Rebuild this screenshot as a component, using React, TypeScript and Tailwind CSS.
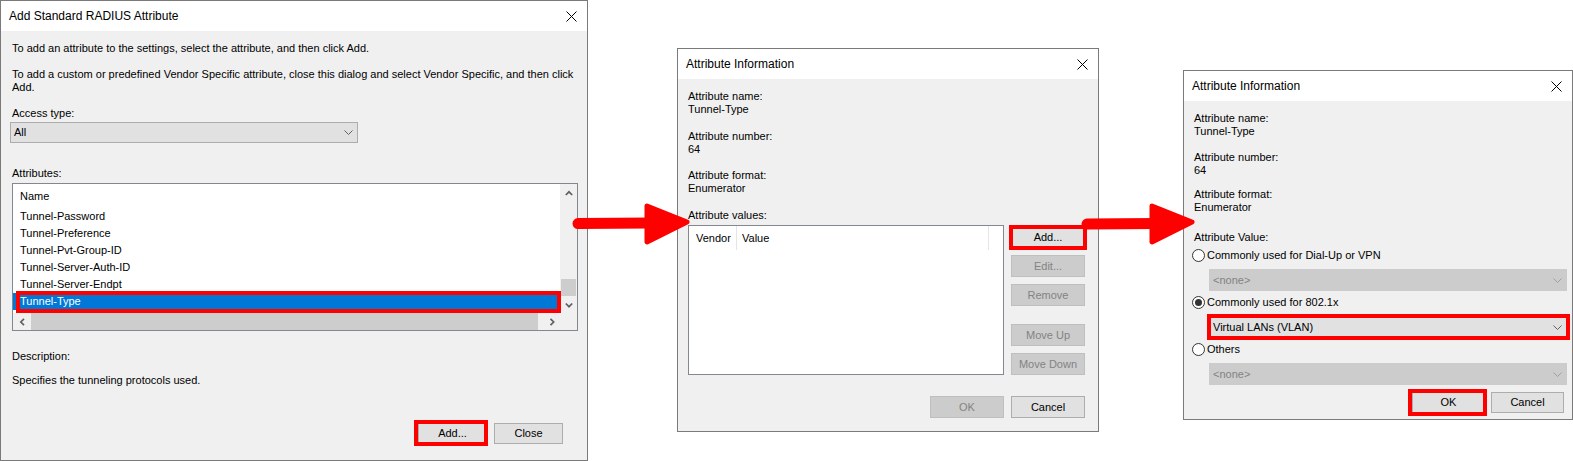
import React from 'react';

const attrs = [
  'Tunnel-Password',
  'Tunnel-Preference',
  'Tunnel-Pvt-Group-ID',
  'Tunnel-Server-Auth-ID',
  'Tunnel-Server-Endpt',
  'Tunnel-Type',
];

function CloseX() {
  return (
    <svg width="11" height="11" viewBox="0 0 11 11" className="block">
      <path d="M0.5 0.5 L10.5 10.5 M10.5 0.5 L0.5 10.5" stroke="#000" strokeWidth="1" fill="none" />
    </svg>
  );
}

function ComboChevron({ color }: { color: string }) {
  return (
    <svg width="9" height="5" viewBox="0 0 9 5" className="block">
      <path d="M0.5 0.5 L4.5 4.5 L8.5 0.5" stroke={color} strokeWidth="1" fill="none" />
    </svg>
  );
}

function ScrollChevron({ dir }: { dir: 'up' | 'down' | 'left' | 'right' }) {
  const d = {
    up: 'M0.8 5 L4 1.8 L7.2 5',
    down: 'M0.8 1.5 L4 4.7 L7.2 1.5',
    left: 'M5 0.8 L1.8 4 L5 7.2',
    right: 'M1.5 0.8 L4.7 4 L1.5 7.2',
  }[dir];
  const vert = dir === 'up' || dir === 'down';
  return (
    <svg width={vert ? 8 : 6} height={vert ? 6 : 8} viewBox={vert ? '0 0 8 6' : '0 0 6 8'} className="block">
      <path d={d} stroke="#606060" strokeWidth="1.7" fill="none" />
    </svg>
  );
}

function Win({ className, title, children }: { className: string; title: string; children: React.ReactNode }) {
  return (
    <div className={`absolute flex flex-col border border-[#7a7a7a] bg-[#f0f0f0] ${className}`}>
      <div className="flex h-[30px] shrink-0 items-center justify-between bg-white pl-[8px] pr-[10px]">
        <span className="text-[12px] leading-[16px]">{title}</span>
        <CloseX />
      </div>
      {children}
    </div>
  );
}

function Btn({ label, disabled, className = '' }: { label: string; disabled?: boolean; className?: string }) {
  return (
    <div
      className={`flex items-center justify-center border ${
        disabled ? 'border-[#bfbfbf] bg-[#cccccc] text-[#838383]' : 'border-[#adadad] bg-[#e1e1e1] text-black'
      } ${className}`}
    >
      {label}
    </div>
  );
}

function Combo({ value, disabled, className = '' }: { value: string; disabled?: boolean; className?: string }) {
  return (
    <div
      className={`flex items-center justify-between border pl-[3px] pr-[4px] ${
        disabled ? 'border-[#cccccc] bg-[#cccccc] text-[#838383]' : 'border-[#adadad] bg-[#e1e1e1] text-black'
      } ${className}`}
    >
      <span>{value}</span>
      <ComboChevron color={disabled ? '#a0a0a0' : '#606060'} />
    </div>
  );
}

function Radio({ checked, label }: { checked?: boolean; label: string }) {
  return (
    <div className="flex h-[13px] items-center">
      <span className="ml-[-2px] flex h-[13px] w-[13px] items-center justify-center rounded-full border border-[#333333] bg-white">
        {checked && <span className="h-[7px] w-[7px] rounded-full bg-[#333333]" />}
      </span>
      <span className="ml-[2px]">{label}</span>
    </div>
  );
}

function Arrow({ className, shaft, head }: { className: string; shaft: string; head: string }) {
  return (
    <svg width="130" height="56" viewBox="0 0 130 56" className={`pointer-events-none absolute ${className}`}>
      <path d={shaft} stroke="#ff0000" strokeWidth="11" strokeLinecap="round" fill="none" />
      <polygon points={head} fill="#ff0000" stroke="#ff0000" strokeWidth="5" strokeLinejoin="round" />
    </svg>
  );
}

function AttributeList() {
  return (
    <div className="relative mt-[3px] grid h-[148px] w-[566px] grid-cols-[1fr_17px] grid-rows-[1fr_17px] border border-[#828790] bg-white">
      <div className="flex flex-col">
        <div className="flex h-[24px] items-center pl-[7px]">Name</div>
        {attrs.map((a) => (
          <div
            key={a}
            className={`flex h-[17px] items-center pl-[7px] ${a === 'Tunnel-Type' ? 'bg-[#0078d7] text-white' : ''}`}
          >
            {a}
          </div>
        ))}
      </div>
      <div className="flex flex-col bg-[#f0f0f0]">
        <div className="flex h-[17px] items-center justify-center">
          <ScrollChevron dir="up" />
        </div>
        <div className="flex flex-1 flex-col justify-end">
          <div className="mx-[1px] h-[17px] bg-[#cdcdcd]" />
        </div>
        <div className="flex h-[17px] items-center justify-center">
          <ScrollChevron dir="down" />
        </div>
      </div>
      <div className="flex bg-[#f0f0f0]">
        <div className="flex w-[17px] items-center justify-center">
          <ScrollChevron dir="left" />
        </div>
        <div className="flex-1">
          <div className="ml-[1px] h-full w-[507px] bg-[#cdcdcd]" />
        </div>
        <div className="flex w-[17px] items-center justify-center">
          <ScrollChevron dir="right" />
        </div>
      </div>
      <div className="bg-[#f0f0f0]" />
      <div className="pointer-events-none absolute left-[3px] top-[107px] h-[22px] w-[545px] border-4 border-[#ff0000]" />
    </div>
  );
}

export default function App() {
  return (
    <div className="relative h-[461px] w-[1573px] overflow-hidden bg-white font-['Liberation_Sans',Arial,sans-serif] text-[11px] leading-[13px] text-black">
      {/* dialog 1 */}
      <Win className="left-0 top-0 h-[461px] w-[588px]" title="Add Standard RADIUS Attribute">
        <div className="flex flex-col pl-[11px] pt-[11px]">
          <p className="whitespace-nowrap">To add an attribute to the settings, select the attribute, and then click Add.</p>
          <p className="mt-[13px] whitespace-nowrap">
            To add a custom or predefined Vendor Specific attribute, close this dialog and select Vendor Specific, and then click
            <br />
            Add.
          </p>
          <p className="mt-[13px]">Access type:</p>
          <Combo value="All" className="ml-[-2px] mt-[2px] h-[21px] w-[348px]" />
          <p className="mt-[24px]">Attributes:</p>
          <AttributeList />
          <p className="mt-[19px]">Description:</p>
          <p className="mt-[11px]">Specifies the tunneling protocols used.</p>
          <div className="mt-[36px] flex justify-end gap-[7px] pr-[24px]">
            <div className="relative">
              <Btn label="Add..." className="h-[21px] w-[69px]" />
              <div className="pointer-events-none absolute left-[-4px] top-[-3px] h-[26px] w-[74px] border-4 border-[#ff0000]" />
            </div>
            <Btn label="Close" className="h-[21px] w-[69px]" />
          </div>
        </div>
      </Win>

      {/* dialog 2 */}
      <Win className="left-[677px] top-[48px] h-[384px] w-[422px]" title="Attribute Information">
        <div className="flex flex-col pl-[10px] pr-[13px] pt-[11px]">
          <p>Attribute name:</p>
          <p>Tunnel-Type</p>
          <p className="mt-[14px]">Attribute number:</p>
          <p>64</p>
          <p className="mt-[13px]">Attribute format:</p>
          <p>Enumerator</p>
          <p className="mt-[14px]">Attribute values:</p>
          <div className="mt-[3px] flex gap-[7px]">
            <div className="h-[150px] w-[316px] border border-[#828790] bg-white">
              <div className="flex h-[24px]">
                <div className="flex w-[48px] items-center border-r border-[#e5e5e5] pl-[7px]">Vendor</div>
                <div className="flex w-[252px] items-center border-r border-[#e5e5e5] pl-[5px]">Value</div>
              </div>
            </div>
            <div className="flex w-[74px] flex-col">
              <div className="relative mt-[1px]">
                <Btn label="Add..." className="h-[22px]" />
                <div className="pointer-events-none absolute left-[-2px] top-[-1px] h-[25px] w-[78px] border-4 border-[#ff0000]" />
              </div>
              <Btn label="Edit..." disabled className="mt-[7px] h-[22px]" />
              <Btn label="Remove" disabled className="mt-[7px] h-[22px]" />
              <Btn label="Move Up" disabled className="mt-[18px] h-[22px]" />
              <Btn label="Move Down" disabled className="mt-[7px] h-[22px]" />
            </div>
          </div>
          <div className="mt-[21px] flex justify-end gap-[7px]">
            <Btn label="OK" disabled className="h-[22px] w-[74px]" />
            <Btn label="Cancel" className="h-[22px] w-[74px]" />
          </div>
        </div>
      </Win>

      {/* dialog 3 */}
      <Win className="left-[1183px] top-[70px] h-[350px] w-[390px]" title="Attribute Information">
        <div className="flex flex-col pl-[10px] pr-[5px] pt-[11px]">
          <p>Attribute name:</p>
          <p>Tunnel-Type</p>
          <p className="mt-[13px]">Attribute number:</p>
          <p>64</p>
          <p className="mt-[11px]">Attribute format:</p>
          <p>Enumerator</p>
          <p className="mt-[17px]">Attribute Value:</p>
          <div className="mt-[5px]">
            <Radio label="Commonly used for Dial-Up or VPN" />
          </div>
          <Combo value="<none>" disabled className="ml-[15px] mt-[7px] h-[22px] w-[358px]" />
          <div className="mt-[5px]">
            <Radio checked label="Commonly used for 802.1x" />
          </div>
          <div className="relative ml-[15px] mt-[7px] w-[358px]">
            <Combo value="Virtual LANs (VLAN)" className="h-[22px]" />
            <div className="pointer-events-none absolute left-[-2px] top-[-2px] h-[26px] w-[363px] border-4 border-[#ff0000]" />
          </div>
          <div className="mt-[5px]">
            <Radio label="Others" />
          </div>
          <Combo value="<none>" disabled className="ml-[15px] mt-[7px] h-[22px] w-[358px]" />
          <div className="mr-[3px] mt-[7px] flex justify-end gap-[6px]">
            <div className="relative">
              <Btn label="OK" className="h-[21px] w-[73px]" />
              <div className="pointer-events-none absolute left-[-4px] top-[-3px] h-[27px] w-[79px] border-4 border-[#ff0000]" />
            </div>
            <Btn label="Cancel" className="h-[21px] w-[73px]" />
          </div>
        </div>
      </Win>

      <Arrow className="left-[570px] top-[196px]" shaft="M8 27.5 L80 27" head="77,10 117,26 77,46" />
      <Arrow className="left-[1080px] top-[196px]" shaft="M7 28 L77 27.5" head="72,10 112,26 72,46" />
    </div>
  );
}
